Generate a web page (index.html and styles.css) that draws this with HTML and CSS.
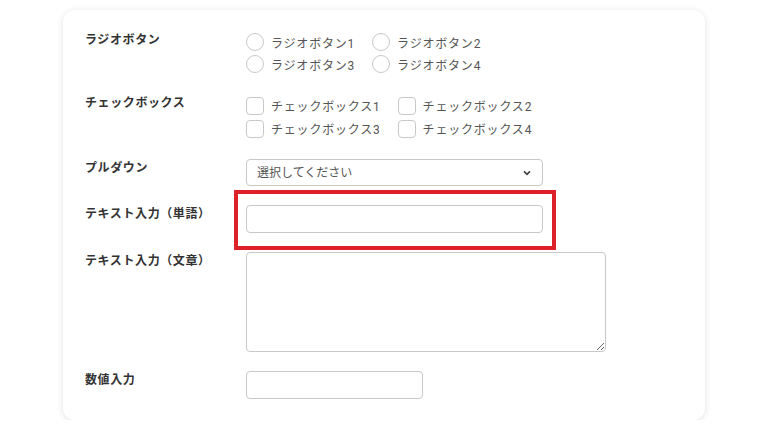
FILE: index.html
```html
<!DOCTYPE html>
<html lang="ja">
<head>
  <meta charset="UTF-8" />
  <title>フォーム部品</title>
  <link rel="stylesheet" href="styles.css">
</head>
<body>
  <div class="card">
    <form class="form">
      <div class="row">
        <label class="row-label">ラジオボタン</label>
        <div class="choices choices-radio">
          <label class="choice"><input type="radio" name="r"> ラジオボタン1</label>
          <label class="choice"><input type="radio" name="r"> ラジオボタン2</label>
          <label class="choice"><input type="radio" name="r"> ラジオボタン3</label>
          <label class="choice"><input type="radio" name="r"> ラジオボタン4</label>
        </div>
      </div>

      <div class="row">
        <label class="row-label">チェックボックス</label>
        <div class="choices choices-check">
          <label class="choice"><input type="checkbox"> チェックボックス1</label>
          <label class="choice"><input type="checkbox"> チェックボックス2</label>
          <label class="choice"><input type="checkbox"> チェックボックス3</label>
          <label class="choice"><input type="checkbox"> チェックボックス4</label>
        </div>
      </div>

      <div class="row">
        <label class="row-label">プルダウン</label>
        <div class="select-wrap">
          <select class="field field-select">
            <option>選択してください</option>
          </select>
          <svg class="select-arrow" width="8" height="6" viewBox="0 0 8 6">
            <path d="M1 1.3 L4 4.3 L7 1.3" fill="none" stroke="#444" stroke-width="1.7"/>
          </svg>
        </div>
      </div>

      <div class="row">
        <label class="row-label">テキスト入力（単語）</label>
        <div class="highlight-wrap">
          <input type="text" class="field field-text">
          <div class="highlight"></div>
        </div>
      </div>

      <div class="row">
        <label class="row-label">テキスト入力（文章）</label>
        <textarea class="field field-area"></textarea>
      </div>

      <div class="row">
        <label class="row-label">数値入力</label>
        <input type="number" class="field field-number">
      </div>
    </form>
  </div>
</body>
</html>
```

FILE: styles.css
```css
body {
  margin: 0;
  background: #fff;
  font-family: Roboto, "Noto Sans CJK JP", sans-serif;
  color: #333;
}

.card {
  box-sizing: border-box;
  width: 642px;
  height: 410px;
  margin: 10px 0 0 63px;
  padding: 21px 22px;
  background: #fff;
  border-radius: 12px;
  box-shadow: 0 1px 6px rgba(0, 0, 0, 0.12);
}

.form {
  display: flex;
  flex-direction: column;
  gap: 19px;
}

.row {
  display: flex;
  align-items: flex-start;
}

.row-label {
  width: 161px;
  flex-shrink: 0;
  font-size: 12px;
  font-weight: bold;
  line-height: 18px;
  letter-spacing: 0.6px;
  color: #333;
}

.choices {
  display: grid;
  grid-template-columns: auto auto;
  justify-content: start;
  column-gap: 17px;
}

.choices-radio {
  grid-auto-rows: 22px;
}

.choices-check {
  grid-auto-rows: 23px;
}

.choice {
  display: flex;
  align-items: center;
  gap: 7px;
  font-size: 12px;
  letter-spacing: 0.8px;
  color: #555;
}

.choice input {
  appearance: none;
  margin: 0;
  width: 18px;
  height: 18px;
  border: 1px solid #c8c8c8;
  background: #fff;
}

.choice input[type="radio"] {
  border-radius: 50%;
}

.choice input[type="checkbox"] {
  border-radius: 4px;
}

.field {
  box-sizing: border-box;
  margin: 0;
  border: 1px solid #c8c8c8;
  border-radius: 4px;
  background: #fff;
  font-family: Roboto, "Noto Sans CJK JP", sans-serif;
  font-size: 12px;
  color: #555;
}

.select-wrap {
  position: relative;
}

.field-select {
  appearance: none;
  width: 297px;
  height: 27px;
  padding: 0 10px;
}

.select-arrow {
  position: absolute;
  right: 12px;
  top: 11px;
  pointer-events: none;
}

.highlight-wrap {
  position: relative;
}

.field-text {
  width: 297px;
  height: 28px;
}

.highlight {
  position: absolute;
  left: -12px;
  top: -15px;
  width: 322px;
  height: 60px;
  box-sizing: border-box;
  border: 4px solid #dc2128;
  pointer-events: none;
}

.field-area {
  width: 360px;
  height: 100px;
  display: block;
}

.field-number {
  width: 177px;
  height: 28px;
}
```
